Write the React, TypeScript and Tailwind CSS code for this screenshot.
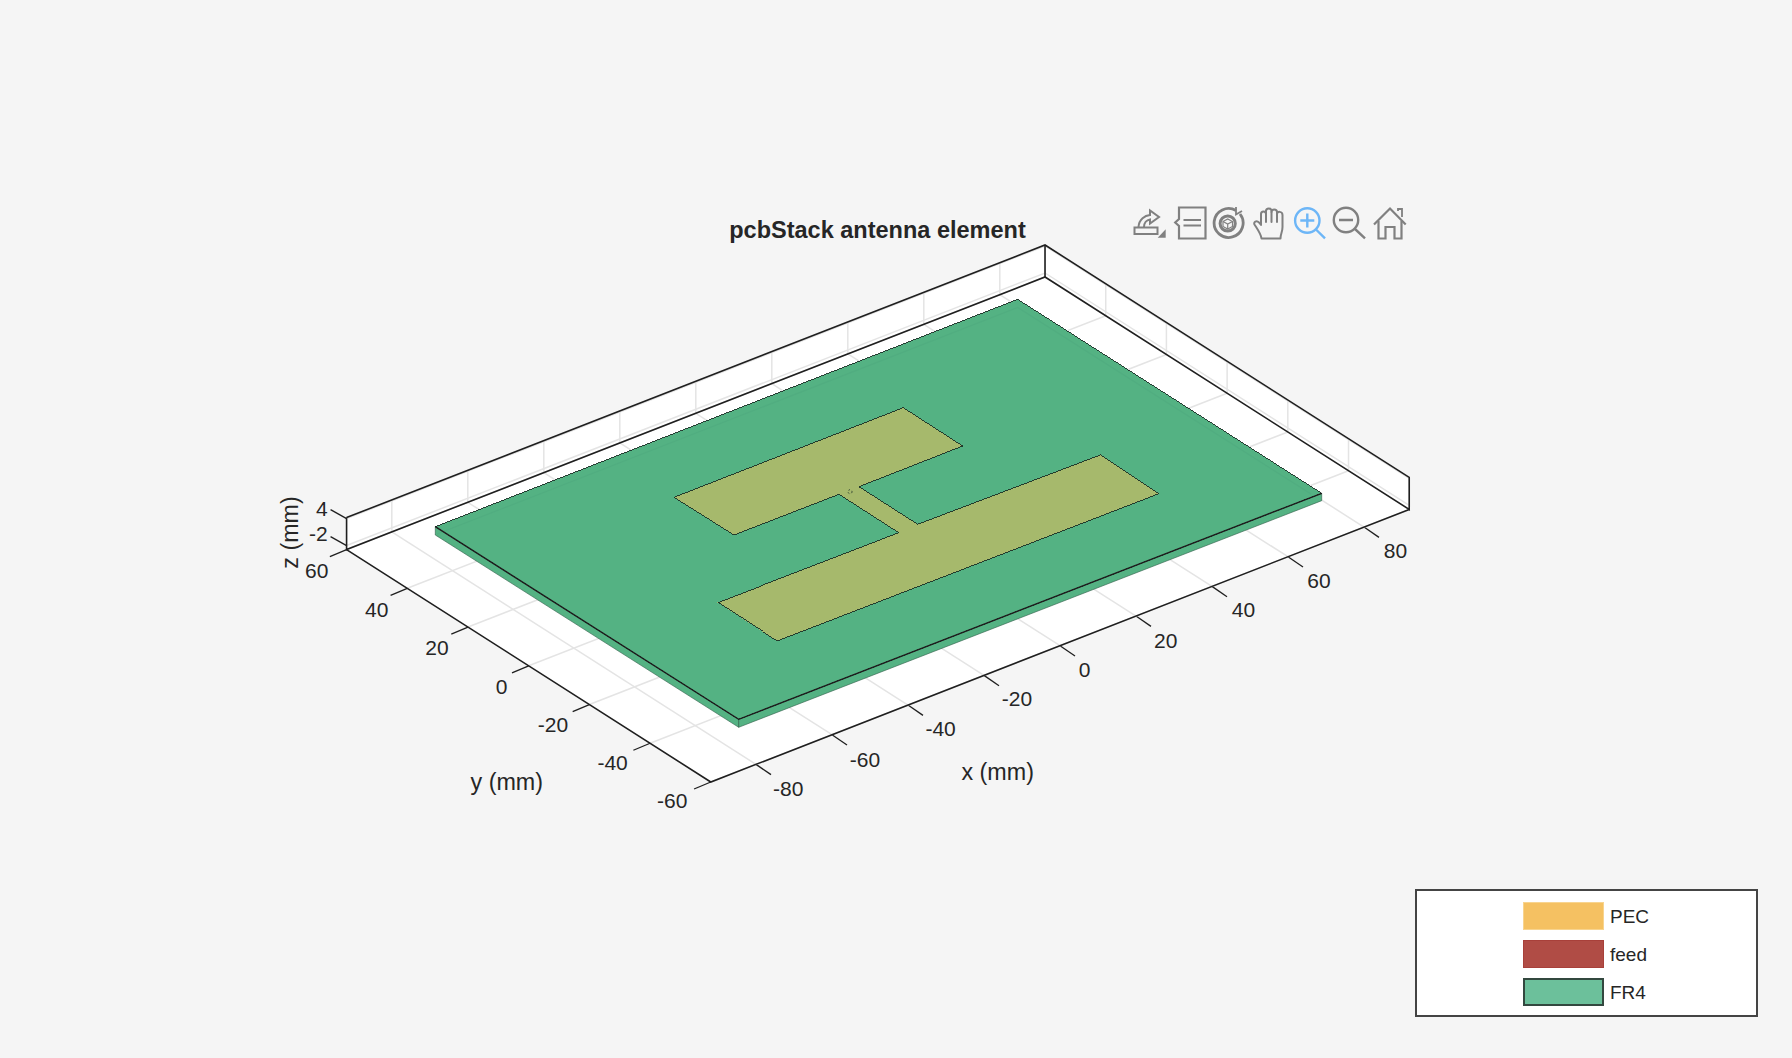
const P = (x: number, y: number): [number, number] => [
  877.9 + 3.8 * x - 3.035 * y,
  529.5 - 1.483 * x - 1.937 * y,
];
const XM = 91.9;
const YM = 60;
const WALL = 32;

const xTicks = [-80, -60, -40, -20, 0, 20, 40, 60, 80];
const yTicks = [-60, -40, -20, 0, 20, 40, 60];

const xLabels: [string, number, number][] = [
  ['-80', 788.3, 788.5],
  ['-60', 865, 759],
  ['-40', 940.6, 728.5],
  ['-20', 1017, 698.5],
  ['0', 1084.6, 669],
  ['20', 1165.7, 640],
  ['40', 1243.4, 609.5],
  ['60', 1318.9, 580],
  ['80', 1395.4, 550],
];
const yLabels: [string, number, number][] = [
  ['60', 316.7, 570.5],
  ['40', 376.7, 609],
  ['20', 437, 647],
  ['0', 501.7, 686],
  ['-20', 553, 724],
  ['-40', 612.6, 762],
  ['-60', 672.3, 800],
];

const pts = (list: [number, number][]) => list.map((p) => p.join(',')).join(' ');

function Seg({ a, b, className }: { a: [number, number]; b: [number, number]; className: string }) {
  return <line x1={a[0]} y1={a[1]} x2={b[0]} y2={b[1]} className={className} />;
}

function Plot() {
  const front = P(-XM, -YM);
  const right = P(XM, -YM);
  const back = P(XM, YM);
  const left = P(-XM, YM);
  const up = (p: [number, number], d = WALL): [number, number] => [p[0], p[1] - d];

  return (
    <svg viewBox="0 0 1792 1058" className="block w-[1792px] h-[1058px]">
      <text x="877.5" y="230" textAnchor="middle" dominantBaseline="central" className="fill-[#262626] text-[23.5px] font-bold">
        pcbStack antenna element
      </text>

      {/* walls + floor */}
      <polygon points={pts([left, up(left), up(back), back])} className="fill-white" />
      <polygon points={pts([back, up(back), up(right), right])} className="fill-white" />
      <polygon points={pts([front, right, back, left])} className="fill-white" />

      {xTicks.map((t) => (
        <g key={t}>
          <Seg a={P(t, -YM)} b={P(t, YM)} className="stroke-[#e4e4e4] stroke-[1.5]" />
          <Seg a={P(t, YM)} b={up(P(t, YM))} className="stroke-[#e4e4e4] stroke-[1.5]" />
          <Seg
            a={P(t, -YM)}
            b={[P(t, -YM)[0] + 15, P(t, -YM)[1] + 10.3]}
            className="stroke-[#1f1f1f] stroke-[1.3]"
          />
        </g>
      ))}
      {yTicks.map((t) => (
        <g key={t}>
          <Seg a={P(-XM, t)} b={P(XM, t)} className="stroke-[#e4e4e4] stroke-[1.5]" />
          <Seg a={P(XM, t)} b={up(P(XM, t))} className="stroke-[#e4e4e4] stroke-[1.5]" />
          <Seg
            a={P(-XM, t)}
            b={[P(-XM, t)[0] - 16.7, P(-XM, t)[1] + 7]}
            className="stroke-[#1f1f1f] stroke-[1.3]"
          />
        </g>
      ))}

      {/* z gridlines */}
      <polyline points={pts([up(left, 4), up(back, 4), up(right, 4)])} className="fill-none stroke-[#e4e4e4] stroke-[1.5]" />
      <polyline points={pts([up(left, 31), up(back, 31), up(right, 31)])} className="fill-none stroke-[#e4e4e4] stroke-[1.5]" />

      {/* box edges */}
      <polyline points={pts([up(left), up(back), up(right), right, back, left, up(left)])} className="fill-none stroke-[#1f1f1f] stroke-[1.6]" />
      <Seg a={back} b={up(back)} className="stroke-[#1f1f1f] stroke-[1.6]" />
      <polyline points={pts([left, front, right])} className="fill-none stroke-[#1f1f1f] stroke-[1.6]" />
      <Seg a={up(left, 31)} b={[left[0] - 16, left[1] - 40]} className="stroke-[#1f1f1f] stroke-[1.3]" />
      <Seg a={up(left, 4)} b={[left[0] - 16, left[1] - 13]} className="stroke-[#1f1f1f] stroke-[1.3]" />

      {/* board */}
      <polygon
        points="435.3,526.7 738.7,719.3 738.7,727.3 435.3,535"
        className="fill-[#54b283] stroke-[#2c5a45] stroke-[0.6]"
      />
      <polygon
        points="738.7,719.3 1321.7,493.3 1321.7,500.7 738.7,727.3"
        className="fill-[#54b283] stroke-[#2c5a45] stroke-[0.6]"
      />
      <polygon
        points="435.3,526.7 1017.7,299.3 1321.7,493.3 738.7,719.3"
        className="fill-[#54b283] stroke-[#1a2e25] stroke-[0.9]"
        shapeRendering="crispEdges"
      />
      <polyline points="437,534 1017.7,307.5 1311,494" className="fill-none stroke-[#51ad80] stroke-[1.2]" />
      <polyline points="435.3,526.7 738.7,719.3 1321.7,493.3" className="fill-none stroke-[#1f1f1f] stroke-[1.4]" />

      {/* patch */}
      <polygon
        points="903.3,407.7 962.7,446 859,486.7 917.7,524.3 1100.6,454.9 1158.9,493.7 777.1,641 717.5,602.5 898.7,532.7 839,494.3 734,535 674,497.3"
        className="fill-[#a6b96c] stroke-[#1a2e25] stroke-[0.9]"
        shapeRendering="crispEdges"
      />
      <circle cx="850" cy="491.7" r="2" className="fill-none stroke-[#1a2e25] stroke-[0.8]" strokeDasharray="1.5 2" />

      {/* tick labels */}
      <g className="fill-[#262626] text-[21px]">
        {[...xLabels, ...yLabels].map(([label, x, y]) => (
          <text key={`${label}-${x}`} x={x} y={y} textAnchor="middle" dominantBaseline="central">
            {label}
          </text>
        ))}
        <text x="327.7" y="508" textAnchor="end" dominantBaseline="central">4</text>
        <text x="327.7" y="533" textAnchor="end" dominantBaseline="central">-2</text>
      </g>

      {/* axis labels */}
      <g className="fill-[#262626] text-[23.3px]">
        <text x="997.7" y="771.5" textAnchor="middle" dominantBaseline="central">x (mm)</text>
        <text x="506.8" y="781.5" textAnchor="middle" dominantBaseline="central">y (mm)</text>
        <text x="0" y="0" textAnchor="middle" dominantBaseline="central" transform="translate(289.5 532.5) rotate(-90)">
          z (mm)
        </text>
      </g>
    </svg>
  );
}

function ExportIcon() {
  return (
    <svg viewBox="0 0 36 36" className="w-9 h-9 fill-none stroke-[#808080] stroke-[2]">
      <rect x="2.5" y="22.5" width="23" height="6.5" />
      <path d="M6.5 22C7 14 13 10.5 18 10V5.5L27 12L18 18.5V14.5C14.5 15 12 18 12 22" />
      <path d="M33.7 24.3V32.7H25.7Z" className="fill-[#808080] stroke-none" />
    </svg>
  );
}

function DataTipIcon() {
  return (
    <svg viewBox="0 0 36 36" className="w-9 h-9 fill-none stroke-[#808080] stroke-[2.2]">
      <path d="M7 2.5H33.5V33.5H7V21L3.2 17.5L7 14Z" />
      <path d="M11.5 15H29M11.5 20.5H29" />
    </svg>
  );
}

function RotateIcon() {
  return (
    <svg viewBox="0 0 36 36" className="w-9 h-9 fill-none stroke-[#808080]">
      <path d="M24 5.5A14.5 14.5 0 1 0 28 9" className="stroke-[2.8]" />
      <path d="M24 2V9.5L30 6" className="stroke-[1.8]" />
      <circle cx="15.7" cy="18.5" r="7.6" className="stroke-[3]" />
      <path d="M11 16.5L15.7 14L20.5 16.5V21.5L15.7 24L11 21.5Z" className="stroke-[1.2]" />
      <path d="M11 16.5L15.7 19L20.5 16.5M15.7 19V24" className="stroke-[1.2]" />
    </svg>
  );
}

function HandIcon() {
  return (
    <svg viewBox="0 0 36 36" className="w-9 h-9 fill-none stroke-[#808080] stroke-[2]" strokeLinejoin="round" strokeLinecap="round">
      <path d="M9.5 33.5C9 29 6 25 2.5 19.5C1.2 17 4.5 15 7 17.5L9 20V9C9 5.5 14 5.5 14 9V6C14 2.5 19.5 2.5 19.5 6V7C19.5 3.5 25 3.5 25 7V9C25 6 30.5 6 30.5 10V22C30.5 27 28.5 29 28.5 33.5Z" />
      <path d="M14 9V17M19.5 7V17M25 9V17" />
    </svg>
  );
}

function ZoomInIcon() {
  return (
    <svg viewBox="0 0 36 36" className="w-9 h-9 fill-none stroke-[#6db6f7] stroke-[2.4]">
      <circle cx="15.3" cy="15.5" r="12.2" />
      <path d="M15.3 8.5V22.5M8.3 15.5H22.3M24 24.5L33 33.3" />
    </svg>
  );
}

function ZoomOutIcon() {
  return (
    <svg viewBox="0 0 36 36" className="w-9 h-9 fill-none stroke-[#808080] stroke-[2.4]">
      <circle cx="14" cy="15" r="12.2" />
      <path d="M7 15H21M23 24L33 33.3" />
    </svg>
  );
}

function HomeIcon() {
  return (
    <svg viewBox="0 0 36 36" className="w-9 h-9 fill-none stroke-[#808080] stroke-[2.2]">
      <path d="M2 19.5L18 3.5L33.7 19.5" />
      <path d="M6.5 16V33.5H13.5V22H22.5V33.5H29.5V16" />
      <path d="M26 6V4H30V12" className="stroke-[1.8]" />
    </svg>
  );
}

function LegendRow({ swatch, label }: { swatch: string; label: string }) {
  return (
    <div className="flex items-center h-[28px] gap-[6px]">
      <div className={`w-[81px] h-[28px] ${swatch}`} />
      <span className="text-[19px] leading-none text-[#262626]">{label}</span>
    </div>
  );
}

export default function App() {
  return (
    <div className="relative w-[1792px] h-[1058px] overflow-hidden bg-[#f5f5f5] font-['Liberation_Sans',Arial,sans-serif]">
      <Plot />

      <div className="absolute left-[1132px] top-[205px] flex gap-1">
        <ExportIcon />
        <DataTipIcon />
        <RotateIcon />
        <HandIcon />
        <ZoomInIcon />
        <ZoomOutIcon />
        <HomeIcon />
      </div>

      <div className="absolute left-[1415px] top-[889px] w-[343px] h-[128px] bg-white border-2 border-[#444444] pl-[106px] pt-[11px] flex flex-col gap-[10px]">
        <LegendRow swatch="bg-[#f5c162] border border-[#f8d48f]" label="PEC" />
        <LegendRow swatch="bg-[#b04c45] border border-[#a8403a]" label="feed" />
        <LegendRow swatch="bg-[#6cc09b] border-2 border-[#33483f]" label="FR4" />
      </div>
    </div>
  );
}
